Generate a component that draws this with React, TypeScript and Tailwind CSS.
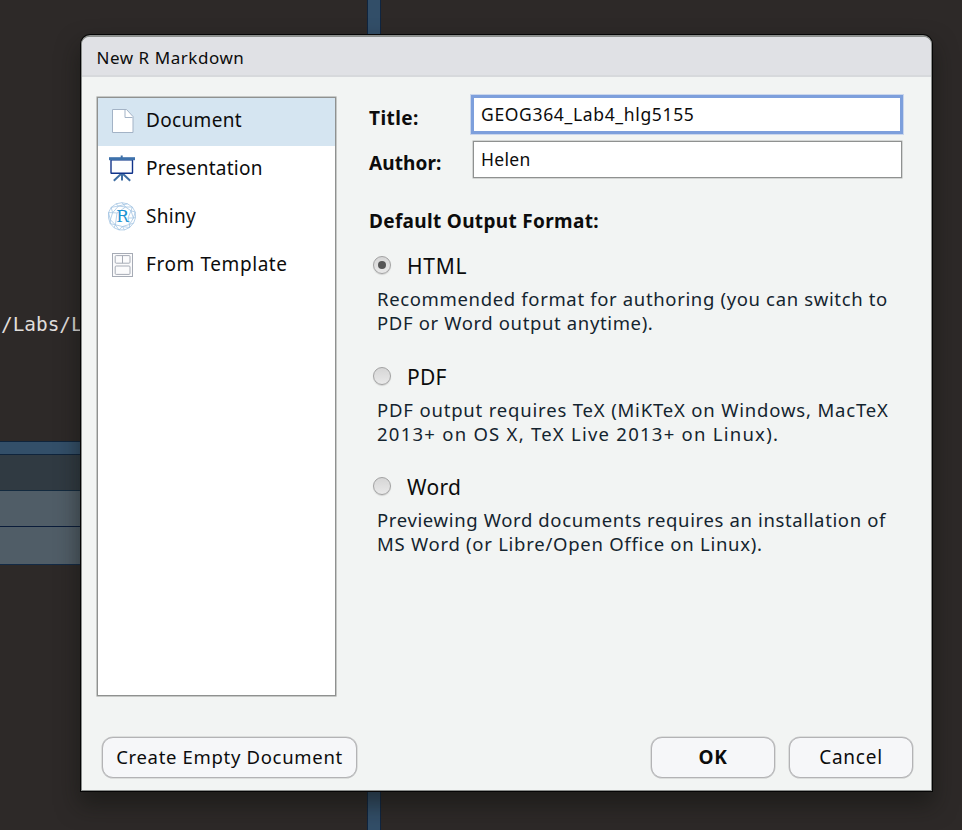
import type { ReactNode } from "react";

function DocumentIcon() {
  return (
    <svg width="28" height="48" viewBox="0 0 28 48" fill="none">
      <path d="M4.5 11.5H18.5L25 18.5V34.5H4.5Z" fill="#fff" stroke="#a3b3c6" />
      <path d="M17 11.8V19.5H24.5" fill="#fff" stroke="#a3b3c6" />
    </svg>
  );
}

function PresentationIcon() {
  return (
    <svg width="28" height="48" viewBox="0 0 28 48" fill="none">
      <path d="M13.7 9.5V12" stroke="#3f70a6" strokeWidth="2" />
      <path d="M14 27L5.8 34.8M14 27L22.2 34.8M14 27V34.5" stroke="#3f6ea3" strokeWidth="2" />
      <rect x="3" y="13.7" width="21.5" height="13.5" rx="0.5" fill="#fcfdff" stroke="#10338a" strokeWidth="1.4" />
      <rect x="1" y="11.2" width="26" height="3" fill="#3d71ab" />
    </svg>
  );
}

function ShinyIcon() {
  return (
    <svg width="28" height="48" viewBox="0 0 28 48" fill="none">
      <g stroke="#9fc1e2" strokeWidth="0.75">
        <path d="M14 8.7L19.5 9.8L24.3 13L27.2 18L27.6 23.5L25.6 29L21.6 33.5L16.5 35.9H11L6 33.7L2.3 29.6L.5 24V18.6L3.2 13.4L8 9.8Z" />
        <path d="M8 9.8L10.5 12L19.5 9.8M10.5 12L3.2 13.4L4.6 18.7L.5 18.6M10.5 12L4.6 18.7L2.4 25.8L.5 18.6M10.5 12L17.5 13L24.3 13M17.5 13L23 16.8L27.2 18M14 8.7L17.5 13M24.3 13L23 16.8L25.4 24L27.6 23.5M27.2 18L25.4 24L21.5 30.5L25.6 29M2.4 25.8L2.3 29.6L7.4 30.8L6 33.7M2.4 25.8L7.4 30.8L14.4 32.5L11 35.9L7.4 30.8M14.4 32.5L16.5 35.9M14.4 32.5L21.5 30.5L21.6 33.5L14.4 32.5M17.5 13L9 19L4.6 18.7M9 19L7.4 30.8M23 16.8L20 24L21.5 30.5M20 24L25.4 24" />
      </g>
      <text x="14.4" y="28.2" textAnchor="middle" fontFamily="'DejaVu Serif', serif" fontSize="17" textLength="12.5" lengthAdjust="spacingAndGlyphs" fill="#1a93d2">
        R
      </text>
    </svg>
  );
}

function TemplateIcon() {
  return (
    <svg width="28" height="48" viewBox="0 0 28 48" fill="none" stroke="#a6abb5">
      <rect x="4.5" y="11.5" width="20" height="23" fill="#fbfbfc" />
      <rect x="7.2" y="13.6" width="14.8" height="7.6" rx="1" />
      <path d="M14.5 13.6V21.2" />
      <rect x="7.2" y="24" width="14.8" height="8.4" rx="1" />
    </svg>
  );
}

function SidebarRow({ icon, children, selected }: { icon: ReactNode; children: ReactNode; selected?: boolean }) {
  return (
    <div className={selected ? "flex h-12 gap-2.5 bg-[#d5e5f1] pl-2.5" : "flex h-12 gap-2.5 pl-2.5"}>
      {icon}
      <div className="pt-[7px] text-[19px] leading-[30px] whitespace-nowrap">{children}</div>
    </div>
  );
}

function Format({ label, checked, children }: { label: ReactNode; checked?: boolean; children: ReactNode }) {
  return (
    <div className="h-[110.6px]">
      <div className="flex h-6">
        <div className="mt-[2px] ml-1 flex size-[18px] shrink-0 items-center justify-center rounded-full border-[1.5px] border-[#a2a2a2] bg-linear-to-b from-[#d6d6d6] to-[#e9e9e9] shadow-[0_1px_1px_#d2d3d2]">
          {checked && <div className="size-2 rounded-full bg-[#555]" />}
        </div>
        <div className="ml-4 text-[21px] leading-[25px]">{label}</div>
      </div>
      <div className="mt-[9px] ml-2 text-[18.5px] leading-6 whitespace-nowrap text-[#14242f]">{children}</div>
    </div>
  );
}

function Backdrop() {
  return (
    <div className="flex h-full w-full">
      <div className="flex w-[367px] flex-col">
        <div className="h-[441px] pt-[313px] font-['DejaVu_Sans_Mono',monospace] text-[19.4px] leading-6 text-[#e0dedc]">
          <span className="ml-px">/Labs/Lab4</span>
        </div>
        <div className="h-[14px] border-y border-[#0f243c] bg-[#334f69]" />
        <div className="h-9 border-b border-[#132a3f] bg-[#303a42]" />
        <div className="h-9 border-b border-[#0a1c3a] bg-[#505d67]" />
        <div className="h-[38px] border-b border-[#132a45] bg-[#505d67]" />
      </div>
      <div className="h-full w-[14px] border-x border-[#0f2540] bg-[#324e68]" />
    </div>
  );
}

const button =
  "flex h-[41px] items-center justify-center rounded-[11px] border border-[#b3b3b5] bg-[#f6f7f9] pb-px whitespace-nowrap shadow-[0_0_0_0.5px_#c6c7c8]";

export default function App() {
  return (
    <div className="relative h-[830px] w-[962px] overflow-hidden bg-[#2d2928] font-['Noto_Sans','Open_Sans',sans-serif] text-[#0c0c0c]">
      <Backdrop />
      <div className="absolute top-[35px] left-[81px] flex h-[756px] w-[851px] flex-col overflow-hidden rounded-t-[9px] border border-t-2 border-[#8b8e8c] bg-[#f2f4f3] shadow-[0_0_0_1px_#050505,0_12px_22px_2px_rgba(15,18,14,0.5)]">
        <div className="h-10 shrink-0 border-b-2 border-[#d7d9dc] bg-[#e0e1e5] pt-[3px] pl-[14.5px] text-[17px] leading-[35px] tracking-[0.54px]">
          New R Markdown
        </div>
        <div className="flex h-[620px] shrink-0 pl-[15px]">
          <div className="mt-5 h-[599px] w-[239px] border border-[#8f9190] bg-white shadow-[0_0_0_0.6px_#a9abaa]">
            <SidebarRow icon={<DocumentIcon />} selected>
              <span className="tracking-[0.33px]">Document</span>
            </SidebarRow>
            <SidebarRow icon={<PresentationIcon />}>
              <span className="tracking-[0.24px]">Presentation</span>
            </SidebarRow>
            <SidebarRow icon={<ShinyIcon />}>
              <span className="tracking-[0.296px]">Shiny</span>
            </SidebarRow>
            <SidebarRow icon={<TemplateIcon />}>
              <span className="tracking-[0.58px]">From Template</span>
            </SidebarRow>
          </div>
          <div className="ml-[33px] flex flex-col pt-[18px]">
            <div className="flex h-10">
              <label className="w-[102px] pt-[11px] text-[19px] leading-6 font-bold tracking-[0.421px]">Title:</label>
              <input
                className="h-[39px] w-[432px] border-[3px] border-[#7d9fdc] bg-white pb-px pl-[7px] text-[17.5px] tracking-[0.66px] shadow-[0_0_0_1px_#cad6ec] outline-none"
                defaultValue="GEOG364_Lab4_hlg5155"
              />
            </div>
            <div className="mt-[6px] flex h-[37px]">
              <label className="w-[104px] pt-[10px] text-[19px] leading-6 font-bold tracking-[0.09px]">Author:</label>
              <input
                className="h-[37px] w-[429px] border border-[#8f9190] bg-white pb-px pl-[7px] text-[17.5px] tracking-[0.3px] shadow-[0_0_0_0.5px_#b4b6b5] outline-none"
                defaultValue="Helen"
              />
            </div>
            <div className="mt-[31px] mb-[21px] text-[19px] leading-6 font-bold tracking-[0.33px]">Default Output Format:</div>
            <Format label={<span className="tracking-[0.7px]">HTML</span>} checked>
              <div className="tracking-[0.65px]">Recommended format for authoring (you can switch to</div>
              <div className="tracking-[0.63px]">PDF or Word output anytime).</div>
            </Format>
            <Format label={<span className="tracking-[0.2px]">PDF</span>}>
              <div className="tracking-[0.82px]">PDF output requires TeX (MiKTeX on Windows, MacTeX</div>
              <div className="tracking-[1.25px]">2013+ on OS X, TeX Live 2013+ on Linux).</div>
            </Format>
            <Format label={<span className="tracking-[0.3px]">Word</span>}>
              <div className="tracking-[0.635px]">Previewing Word documents requires an installation of</div>
              <div className="tracking-[0.73px]">MS Word (or Libre/Open Office on Linux).</div>
            </Format>
          </div>
        </div>
        <div className="mt-10 flex pr-[18px] pl-5">
          <button className={`${button} w-[255px] text-[18.5px] tracking-[0.68px]`}>Create Empty Document</button>
          <button className={`${button} ml-auto w-[124px] text-[19px] font-bold tracking-[0.6px]`}>OK</button>
          <button className={`${button} ml-[14px] w-[124px] text-[19px] tracking-[0.75px]`}>Cancel</button>
        </div>
      </div>
    </div>
  );
}
